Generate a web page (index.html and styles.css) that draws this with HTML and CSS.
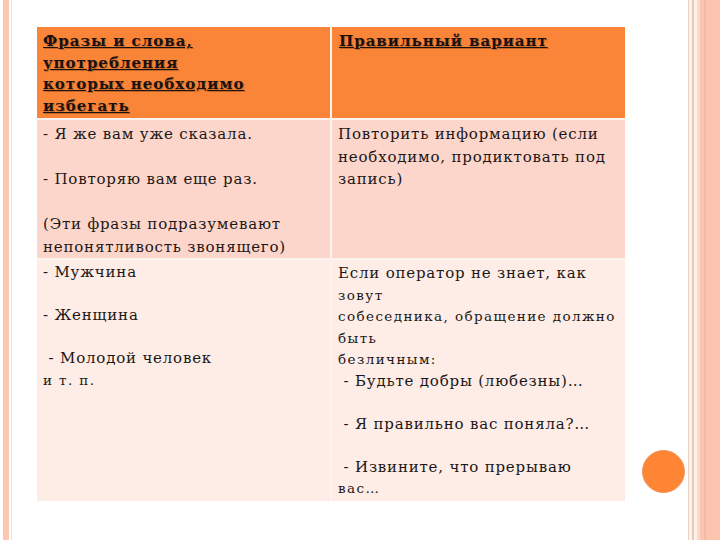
FILE: index.html
```html
<!DOCTYPE html>
<html lang="ru">
<head>
<meta charset="utf-8">
<link rel="stylesheet" href="styles.css">
</head>
<body>
<div class="slide">
  <div class="edge-left"></div>
  <main class="content">
    <table class="phrases">
      <colgroup><col class="c1"><col class="c2"></colgroup>
      <tr class="head">
        <td><span class="u">Фразы и слова,<br>употребления<br>которых необходимо<br>избегать</span></td>
        <td><span class="u">Правильный вариант</span></td>
      </tr>
      <tr class="r1">
        <td>- Я же вам уже сказала.<br><br>- Повторяю вам еще раз.<br><br>(Эти фразы подразумевают<br>непонятливость звонящего)</td>
        <td>Повторить информацию (если<br>необходимо, продиктовать под<br>запись)</td>
      </tr>
      <tr class="r2">
        <td>- Мужчина<br><br>- Женщина<br><br>&nbsp;- Молодой человек<br><span class="sm">и т. п.</span></td>
        <td>Если оператор не знает, как<br><span class="sm">зовут<br>собеседника, обращение должно<br>быть<br>безличным:</span><br>&nbsp;- Будьте добры (любезны)…<br><br>&nbsp;- Я правильно вас поняла?…<br><br>&nbsp;- Извините, что прерываю<br><span class="sm">вас…</span></td>
      </tr>
    </table>
  </main>
  <div class="edge-right"></div>
  <div class="dot"></div>
</div>
</body>
</html>
```
FILE: styles.css
```css
html, body {
  margin: 0;
  padding: 0;
  background: #ffffff;
}
.slide {
  position: relative;
  display: flex;
  width: 720px;
  height: 540px;
  overflow: hidden;
  font-family: "DejaVu Serif", "Liberation Serif", serif;
  color: #1c1717;
}
.edge-left {
  width: 14px;
  flex: none;
  background: linear-gradient(to right,
    #ffffff 0, #ffffff 3px,
    #fcc6b2 3px, #fcc6b2 9px,
    #ffffff 9px, #ffffff 11px,
    #f1ddd2 11px, #f1ddd2 12px,
    #ffffff 12px);
}
.edge-right {
  width: 32px;
  flex: none;
  background: linear-gradient(to right,
    #ead2c4 0, #ead2c4 1px,
    #fbf3ee 1px, #fbf3ee 4px,
    #e6cab9 4px, #e6cab9 6px,
    #fdf2e6 6px, #fdf2e6 9px,
    #fcd8c8 9px, #fcd8c8 12px,
    #fdc5af 12px, #fdc5af 16px,
    #f7b9a3 16px, #f7b9a3 18px,
    #fdc5af 18px);
}
.content {
  flex: 1;
  padding: 27px 0 0 23px;
}
.phrases {
  width: 588px;
  border-collapse: collapse;
  table-layout: fixed;
}
.phrases td {
  vertical-align: top;
  padding: 3px 2px 0 6px;
  border: 2px solid #fdf3ee;
  font-size: 15px;
  letter-spacing: 0.8px;
  white-space: nowrap;
}
.phrases tr:first-child td { border-top: none; }
.phrases td:first-child { border-left: none; }
.phrases td:last-child { border-right: none; }
.phrases tr:last-child td { border-bottom: none; }
.head td {
  background: #fa8538;
  height: 87px;
  font-weight: bold;
  font-size: 15px;
  letter-spacing: 1px;
  line-height: 21.7px;
  padding-top: 4px;
  color: #1a1210;
  text-shadow: 1px 1px 1px rgba(90, 40, 10, 0.35);
}
.head td:last-child { padding-left: 7px; }
.u { text-decoration: underline; }
.r1 td {
  background: #fcd6ca;
  height: 131px;
  line-height: 22.5px;
}
.r2 td {
  background: #fdede6;
  height: 238px;
  line-height: 21.5px;
  padding-top: 2px;
}
.r2 td:last-child { padding-top: 3px; }
.sm {
  font-size: 13.5px;
  letter-spacing: 1.4px;
  line-height: 14px;
}
.dot {
  position: absolute;
  left: 642px;
  top: 450px;
  width: 41px;
  height: 41px;
  border-radius: 50%;
  background: #fd8533;
  border: 1px solid #f1945a;
}
```
